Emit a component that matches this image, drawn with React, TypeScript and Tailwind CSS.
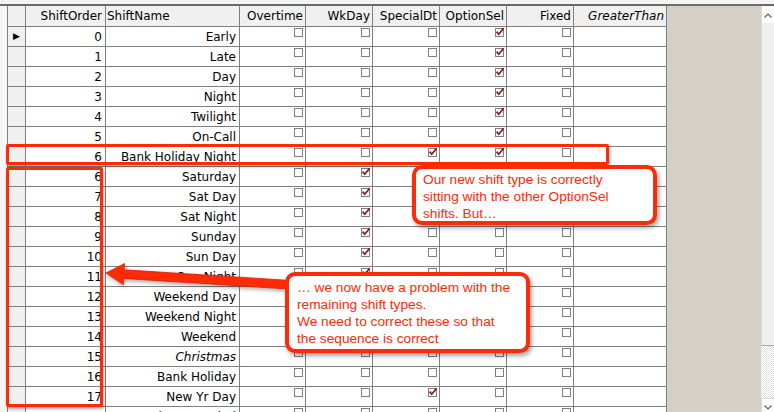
import React from "react";

type Row = {
  order: string;
  name: string;
  ot?: boolean;
  wk?: boolean;
  sp?: boolean;
  op?: boolean;
  italic?: boolean;
};

const ROWS: Row[] = [
  { order: "0", name: "Early", op: true },
  { order: "1", name: "Late", op: true },
  { order: "2", name: "Day", op: true },
  { order: "3", name: "Night", op: true },
  { order: "4", name: "Twilight", op: true },
  { order: "5", name: "On-Call", op: true },
  { order: "6", name: "Bank Holiday Night", sp: true, op: true },
  { order: "6", name: "Saturday", wk: true },
  { order: "7", name: "Sat Day", wk: true },
  { order: "8", name: "Sat Night", wk: true },
  { order: "9", name: "Sunday", wk: true },
  { order: "10", name: "Sun Day", wk: true },
  { order: "11", name: "Sun Night", wk: true },
  { order: "12", name: "Weekend Day" },
  { order: "13", name: "Weekend Night" },
  { order: "14", name: "Weekend" },
  { order: "15", name: "Christmas", italic: true },
  { order: "16", name: "Bank Holiday" },
  { order: "17", name: "New Yr Day", sp: true },
  { order: "18", name: "Three Handed" },
];

function Box({ on }: { on?: boolean }) {
  return (
    <span className="relative block h-[9px] w-[9px] border border-[#7f7f7f] bg-white">
      {on && (
        <svg className="absolute -left-px -top-px overflow-visible" width="9" height="9" viewBox="0 0 9 9">
          <path d="M1.6 3.6 L3.7 6.2 L8.6 0.4" fill="none" stroke="#8b1a1a" strokeWidth="1.7" />
        </svg>
      )}
    </span>
  );
}

function CheckCell({ w, on }: { w: string; on?: boolean }) {
  return (
    <div className={`${w} flex h-full shrink-0 items-start justify-end border-r border-[#808080] pr-[2px] pt-[1px]`}>
      <Box on={on} />
    </div>
  );
}

export default function App() {
  return (
    <div className="relative h-[412px] w-[774px] overflow-hidden bg-[#f4f4f4] font-['DejaVu_Sans',sans-serif] text-[12px] text-black">
      <div className="h-[4px]" />
      <div className="flex h-[408px] border-t-2 border-[#6b6b6b]">
        <div className="w-[7px] shrink-0 bg-[#f6f6f6]" />

        {/* grid */}
        <div className="flex w-[660px] shrink-0 flex-col overflow-hidden border-l border-[#808080] bg-white">
          <div className="flex h-[21px] shrink-0 border-b border-[#808080] bg-[#f0f0f0]">
            <div className="w-[18px] shrink-0 border-r border-[#808080]" />
            <div className="flex w-[80px] shrink-0 items-center justify-end border-r border-[#808080] pr-[3px]">ShiftOrder</div>
            <div className="flex w-[134px] shrink-0 items-center border-r border-[#808080] pl-[1px]">ShiftName</div>
            <div className="flex w-[66px] shrink-0 items-center justify-end border-r border-[#808080] pr-[2px]">Overtime</div>
            <div className="flex w-[67px] shrink-0 items-center justify-end border-r border-[#808080] pr-[2px]">WkDay</div>
            <div className="flex w-[67px] shrink-0 items-center justify-end border-r border-[#808080] pr-[2px]">SpecialDt</div>
            <div className="flex w-[67px] shrink-0 items-center justify-end border-r border-[#808080] pr-[2px]">OptionSel</div>
            <div className="flex w-[67px] shrink-0 items-center justify-end border-r border-[#808080] pr-[2px]">Fixed</div>
            <div className="flex w-[93px] shrink-0 items-center justify-end border-r border-[#808080] pr-[2px] italic">GreaterThan</div>
          </div>

          {ROWS.map((r, i) => (
            <div key={i} className="flex h-[20px] shrink-0 border-b border-[#808080]">
              <div className="flex w-[18px] shrink-0 items-center justify-center border-r border-[#808080] bg-[#f0f0f0]">
                {i === 0 && <span className="text-[9px] leading-none">▶</span>}
              </div>
              <div className="flex w-[80px] shrink-0 items-center justify-end border-r border-[#808080] pr-[3px]">{r.order}</div>
              <div className={`flex w-[134px] shrink-0 items-center justify-end border-r border-[#808080] pr-[3px] ${r.italic ? "italic" : ""}`}>
                {r.name}
              </div>
              <CheckCell w="w-[66px]" on={r.ot} />
              <CheckCell w="w-[67px]" on={r.wk} />
              <CheckCell w="w-[67px]" on={r.sp} />
              <CheckCell w="w-[67px]" on={r.op} />
              <CheckCell w="w-[67px]" />
              <div className="h-full w-[93px] shrink-0 border-r border-[#808080]" />
            </div>
          ))}
        </div>

        <div className="w-[94px] shrink-0 bg-[#d4d0c8]" />

        {/* scrollbar */}
        <div className="flex w-[13px] shrink-0 flex-col bg-[#f4f4f4]">
          <div className="mt-px flex h-[16px] shrink-0 items-center justify-center border-l border-[#dadada] bg-white">
            <svg width="8" height="5" viewBox="0 0 8 5">
              <path d="M0.5 4.5 L4 1 L7.5 4.5" fill="none" stroke="#606060" strokeWidth="1.2" />
            </svg>
          </div>
          <div className="flex-1 border-b border-l border-[#a9a9a9] border-l-[#dadada] bg-[#f0f0f0]" />
          <div className="h-[52px] shrink-0 bg-[repeating-conic-gradient(#e3e3e3_0%_25%,#ffffff_0%_50%)] bg-[length:2px_2px]" />
          <div className="flex h-[14px] shrink-0 items-end justify-center border-l border-t border-[#dadada] bg-white pb-[2px]">
            <svg width="8" height="5" viewBox="0 0 8 5">
              <path d="M0.5 0.5 L4 4 L7.5 0.5" fill="none" stroke="#606060" strokeWidth="1.2" />
            </svg>
          </div>
        </div>
      </div>

      {/* annotations */}
      <div className="absolute left-[6px] top-[144px] h-[21px] w-[603px] rounded-[2px] border-[3px] border-[#ff2a06] shadow-[1px_2px_3px_rgba(0,0,0,0.3)]" />
      <div className="absolute left-[6px] top-[167px] h-[240px] w-[97px] rounded-[2px] border-[3px] border-[#ff2a06] shadow-[1px_2px_3px_rgba(0,0,0,0.3)]" />

      <svg className="absolute left-[100px] top-[255px] drop-shadow-[1px_2px_2px_rgba(0,0,0,0.35)]" width="200" height="45" viewBox="0 0 200 45">
        <polygon
          points="6,18 24.6,8.6 24.2,14.8 192.3,25.6 191.7,34.2 23.7,23.4 23.3,29.6"
          fill="#ff2a06"
          stroke="#e02000"
          strokeWidth="0.8"
          strokeLinejoin="round"
        />
      </svg>

      <div className="absolute left-[412px] top-[165px] h-[60px] w-[245px] rounded-[10px] border-[4px] border-[#ff2a06] bg-white pl-[7px] pt-[2px] font-['Liberation_Sans',Arial,sans-serif] text-[13.7px] leading-[17px] text-[#ff2a06] shadow-[2px_3px_4px_rgba(0,0,0,0.35)]">
        <div className="whitespace-nowrap">Our new shift type is correctly</div>
        <div className="whitespace-nowrap">sitting with the other OptionSel</div>
        <div className="whitespace-nowrap">shifts. But…</div>
      </div>

      <div className="absolute left-[285px] top-[272px] h-[81px] w-[245px] rounded-[10px] border-[4px] border-[#ff2a06] bg-white pl-[8px] pt-[3px] font-['Liberation_Sans',Arial,sans-serif] text-[13.7px] leading-[17px] text-[#ff2a06] shadow-[2px_3px_4px_rgba(0,0,0,0.35)]">
        <div className="whitespace-nowrap">… we now have a problem with the</div>
        <div className="whitespace-nowrap">remaining shift types.</div>
        <div className="whitespace-nowrap">We need to correct these so that</div>
        <div className="whitespace-nowrap">the sequence is correct</div>
      </div>
    </div>
  );
}
